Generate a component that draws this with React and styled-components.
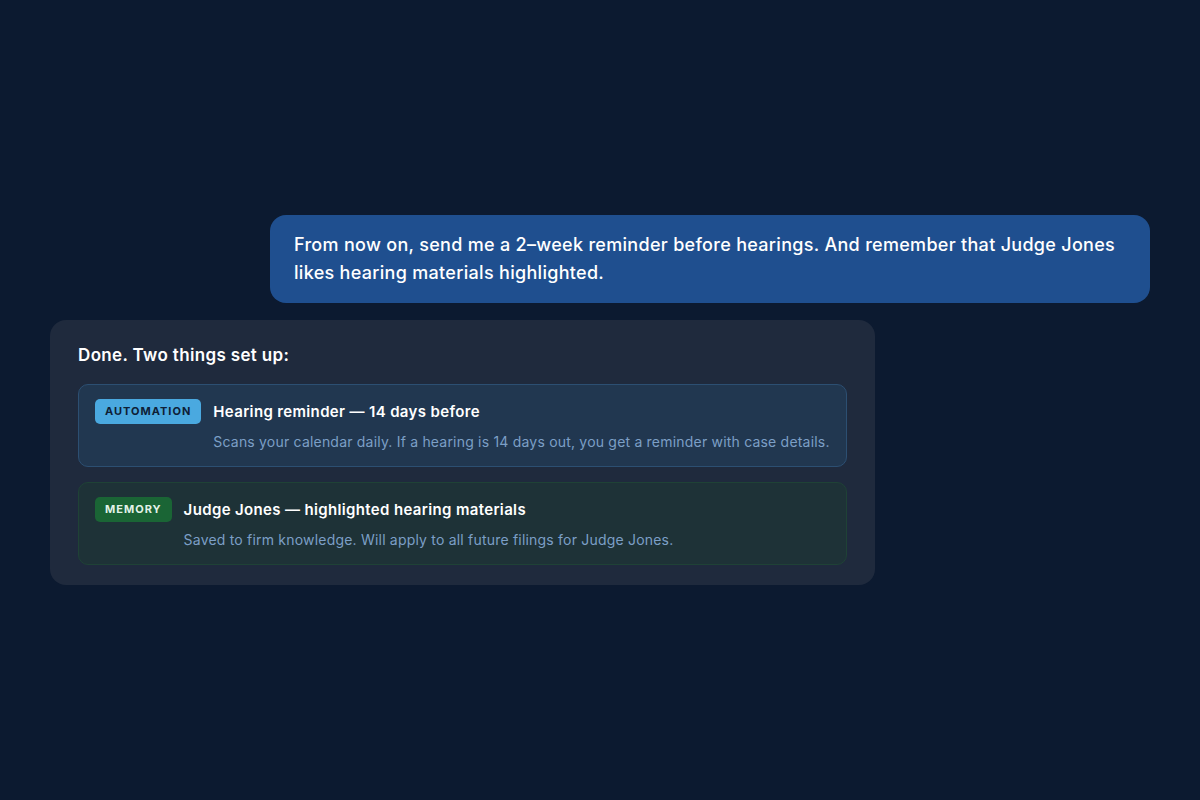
import styled, { createGlobalStyle } from "styled-components";

const GlobalStyle = createGlobalStyle`
  html, body {
    margin: 0;
    padding: 0;
    background: #0c1a30;
    font-family: Inter, "Noto Sans", sans-serif;
  }
`;

const Page = styled.div`
  width: 1200px;
  height: 800px;
  display: flex;
  align-items: center;
  justify-content: center;
`;

const Chat = styled.div`
  width: 1100px;
  display: flex;
  flex-direction: column;
  gap: 17px;
`;

const UserBubble = styled.div`
  align-self: flex-end;
  width: 880px;
  box-sizing: border-box;
  background: #1f4f8f;
  color: #ffffff;
  border-radius: 16px;
  padding: 16px 24px;
  font-size: 18px;
  font-weight: 500;
  line-height: 28px;
  letter-spacing: 0.3px;
`;

const AssistantCard = styled.div`
  align-self: flex-start;
  width: 825px;
  box-sizing: border-box;
  background: #1f2a3d;
  border-radius: 16px;
  padding: 22px 28px 20px;
  display: flex;
  flex-direction: column;
  gap: 16px;
`;

const Intro = styled.div`
  color: #ffffff;
  font-size: 17px;
  font-weight: 600;
  line-height: 26px;
  letter-spacing: 0.35px;
`;

const Items = styled.div`
  display: flex;
  flex-direction: column;
  gap: 15px;
`;

const Item = styled.div`
  display: flex;
  align-items: flex-start;
  gap: 12px;
  padding: 15px 16px 14px;
  border-radius: 10px;
  background: ${(p) => (p.kind === "memory" ? "#1e3237" : "#213750")};
  border: 1px solid ${(p) => (p.kind === "memory" ? "#1f4236" : "#2c4f72")};
`;

const Badge = styled.span`
  flex-shrink: 0;
  display: inline-block;
  margin-top: -1px;
  padding: 0 10px;
  height: 25px;
  line-height: 25px;
  border-radius: 5px;
  font-size: 11px;
  font-weight: 700;
  letter-spacing: 1px;
  background: ${(p) => (p.kind === "memory" ? "#1a6535" : "#4aa9e0")};
  color: ${(p) => (p.kind === "memory" ? "#e2f3e8" : "#0e2036")};
`;

const Body = styled.div`
  display: flex;
  flex-direction: column;
  gap: 9px;
  padding-top: 1px;
`;

const Title = styled.div`
  color: #ffffff;
  font-size: 15px;
  font-weight: 600;
  line-height: 22px;
  letter-spacing: 0.35px;
`;

const Desc = styled.div`
  color: #7c9fc6;
  font-size: 14px;
  line-height: 20px;
  letter-spacing: 0.2px;
`;

const items = [
  {
    kind: "automation",
    label: "AUTOMATION",
    title: "Hearing reminder — 14 days before",
    desc: "Scans your calendar daily. If a hearing is 14 days out, you get a reminder with case details.",
  },
  {
    kind: "memory",
    label: "MEMORY",
    title: "Judge Jones — highlighted hearing materials",
    desc: "Saved to firm knowledge. Will apply to all future filings for Judge Jones.",
  },
];

function App() {
  return (
    <Page>
      <GlobalStyle />
      <Chat>
        <UserBubble>
          From now on, send me a 2–week reminder before hearings. And remember that Judge Jones
          likes hearing materials highlighted.
        </UserBubble>
        <AssistantCard>
          <Intro>Done. Two things set up:</Intro>
          <Items>
            {items.map((it) => (
              <Item key={it.kind} kind={it.kind}>
                <Badge kind={it.kind}>{it.label}</Badge>
                <Body>
                  <Title>{it.title}</Title>
                  <Desc>{it.desc}</Desc>
                </Body>
              </Item>
            ))}
          </Items>
        </AssistantCard>
      </Chat>
    </Page>
  );
}

export default App;
